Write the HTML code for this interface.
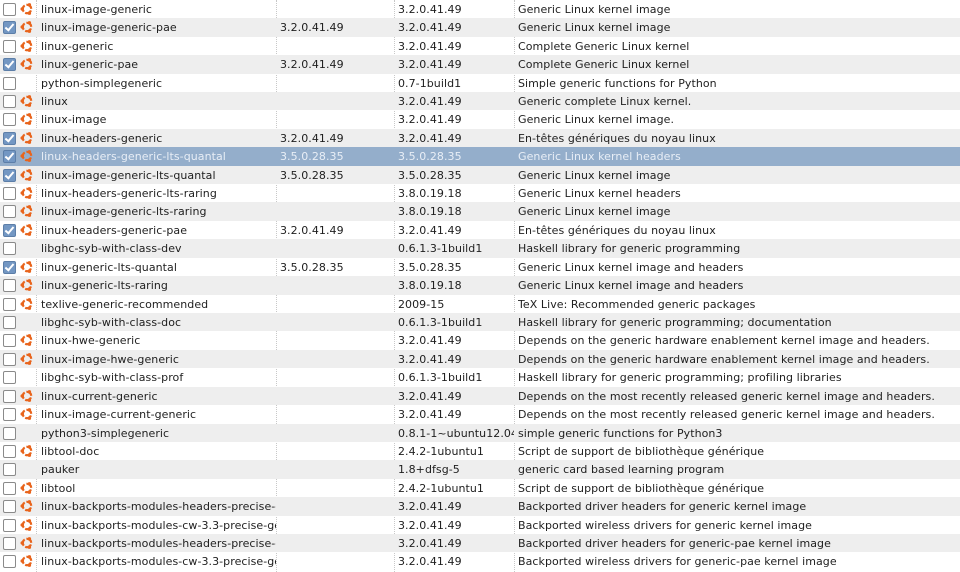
<!DOCTYPE html>
<html><head><meta charset="utf-8"><style>
html,body{margin:0;padding:0;background:#fff;width:960px;height:572px;overflow:hidden}
body{font-family:"DejaVu Sans","Liberation Sans",sans-serif;font-size:11px;color:#1e1e1e;letter-spacing:0.06px}
.r{position:relative;height:18.43px;white-space:nowrap}
.r:nth-child(even){background:#eeeeee}
.r.sel{background:#94aecb;color:#e8eef6}
.r span{position:absolute;top:1px;line-height:18.43px;overflow:hidden}
.cb{position:absolute;left:3px;top:3px;width:11px;height:11px;border:1px solid #8a8a8a;border-radius:2px;background:#fff}
.cb.c{background:#7397c3;border-color:#5c7ea8}
.cb.c:after{content:"";position:absolute;left:3px;top:0px;width:3px;height:7px;border:solid #fff;border-width:0 2px 2px 0;transform:rotate(40deg)}
.ic{position:absolute;left:20px;top:2px}
.n{left:41px;width:235px}
.v1{left:280px;width:112px}
.v2{left:398px;width:116px}
.d{left:518px;width:440px}
.sep{position:absolute;top:0;height:572px;border-left:1px dotted #c8c8c8}
</style></head><body>
<div class="sep" style="left:36px"></div><div class="sep" style="left:276px"></div><div class="sep" style="left:394px"></div><div class="sep" style="left:514px"></div>
<div id="t" style="position:relative;top:-0.2px"></div>
<script>
var ic='<svg class="ic" width="14" height="14" viewBox="0 0 14 14"><circle cx="7" cy="7" r="4.2" fill="none" stroke="#e8641c" stroke-width="2.2" stroke-dasharray="7 1.8" transform="rotate(20 7 7)"/><circle cx="2.2" cy="7" r="1.7" fill="#e8641c"/><circle cx="9.4" cy="2.8" r="1.7" fill="#e8641c"/><circle cx="9.4" cy="11.2" r="1.7" fill="#e8641c"/></svg>';
var d=[
[0,1,"linux-image-generic","","3.2.0.41.49","Generic Linux kernel image"],
[1,1,"linux-image-generic-pae","3.2.0.41.49","3.2.0.41.49","Generic Linux kernel image"],
[0,1,"linux-generic","","3.2.0.41.49","Complete Generic Linux kernel"],
[1,1,"linux-generic-pae","3.2.0.41.49","3.2.0.41.49","Complete Generic Linux kernel"],
[0,0,"python-simplegeneric","","0.7-1build1","Simple generic functions for Python"],
[0,1,"linux","","3.2.0.41.49","Generic complete Linux kernel."],
[0,1,"linux-image","","3.2.0.41.49","Generic Linux kernel image."],
[1,1,"linux-headers-generic","3.2.0.41.49","3.2.0.41.49","En-têtes génériques du noyau linux"],
[1,1,"linux-headers-generic-lts-quantal","3.5.0.28.35","3.5.0.28.35","Generic Linux kernel headers"],
[1,1,"linux-image-generic-lts-quantal","3.5.0.28.35","3.5.0.28.35","Generic Linux kernel image"],
[0,1,"linux-headers-generic-lts-raring","","3.8.0.19.18","Generic Linux kernel headers"],
[0,1,"linux-image-generic-lts-raring","","3.8.0.19.18","Generic Linux kernel image"],
[1,1,"linux-headers-generic-pae","3.2.0.41.49","3.2.0.41.49","En-têtes génériques du noyau linux"],
[0,0,"libghc-syb-with-class-dev","","0.6.1.3-1build1","Haskell library for generic programming"],
[1,1,"linux-generic-lts-quantal","3.5.0.28.35","3.5.0.28.35","Generic Linux kernel image and headers"],
[0,1,"linux-generic-lts-raring","","3.8.0.19.18","Generic Linux kernel image and headers"],
[0,1,"texlive-generic-recommended","","2009-15","TeX Live: Recommended generic packages"],
[0,0,"libghc-syb-with-class-doc","","0.6.1.3-1build1","Haskell library for generic programming; documentation"],
[0,1,"linux-hwe-generic","","3.2.0.41.49","Depends on the generic hardware enablement kernel image and headers."],
[0,1,"linux-image-hwe-generic","","3.2.0.41.49","Depends on the generic hardware enablement kernel image and headers."],
[0,0,"libghc-syb-with-class-prof","","0.6.1.3-1build1","Haskell library for generic programming; profiling libraries"],
[0,1,"linux-current-generic","","3.2.0.41.49","Depends on the most recently released generic kernel image and headers."],
[0,1,"linux-image-current-generic","","3.2.0.41.49","Depends on the most recently released generic kernel image and headers."],
[0,0,"python3-simplegeneric","","0.8.1-1~ubuntu12.04","simple generic functions for Python3"],
[0,1,"libtool-doc","","2.4.2-1ubuntu1","Script de support de bibliothèque générique"],
[0,0,"pauker","","1.8+dfsg-5","generic card based learning program"],
[0,1,"libtool","","2.4.2-1ubuntu1","Script de support de bibliothèque générique"],
[0,1,"linux-backports-modules-headers-precise-generic","","3.2.0.41.49","Backported driver headers for generic kernel image"],
[0,1,"linux-backports-modules-cw-3.3-precise-generic","","3.2.0.41.49","Backported wireless drivers for generic kernel image"],
[0,1,"linux-backports-modules-headers-precise-generic-pae","","3.2.0.41.49","Backported driver headers for generic-pae kernel image"],
[0,1,"linux-backports-modules-cw-3.3-precise-generic-pae","","3.2.0.41.49","Backported wireless drivers for generic-pae kernel image"]];
var h='';d.forEach(function(x,i){h+='<div class="r'+(i==8?' sel':'')+'"><div class="cb'+(x[0]?' c':'')+'"></div>'+(x[1]?ic:'')+'<span class="n">'+x[2]+'</span><span class="v1">'+x[3]+'</span><span class="v2">'+x[4]+'</span><span class="d">'+x[5]+'</span></div>';});
document.getElementById('t').innerHTML=h;
</script>
</body></html>
